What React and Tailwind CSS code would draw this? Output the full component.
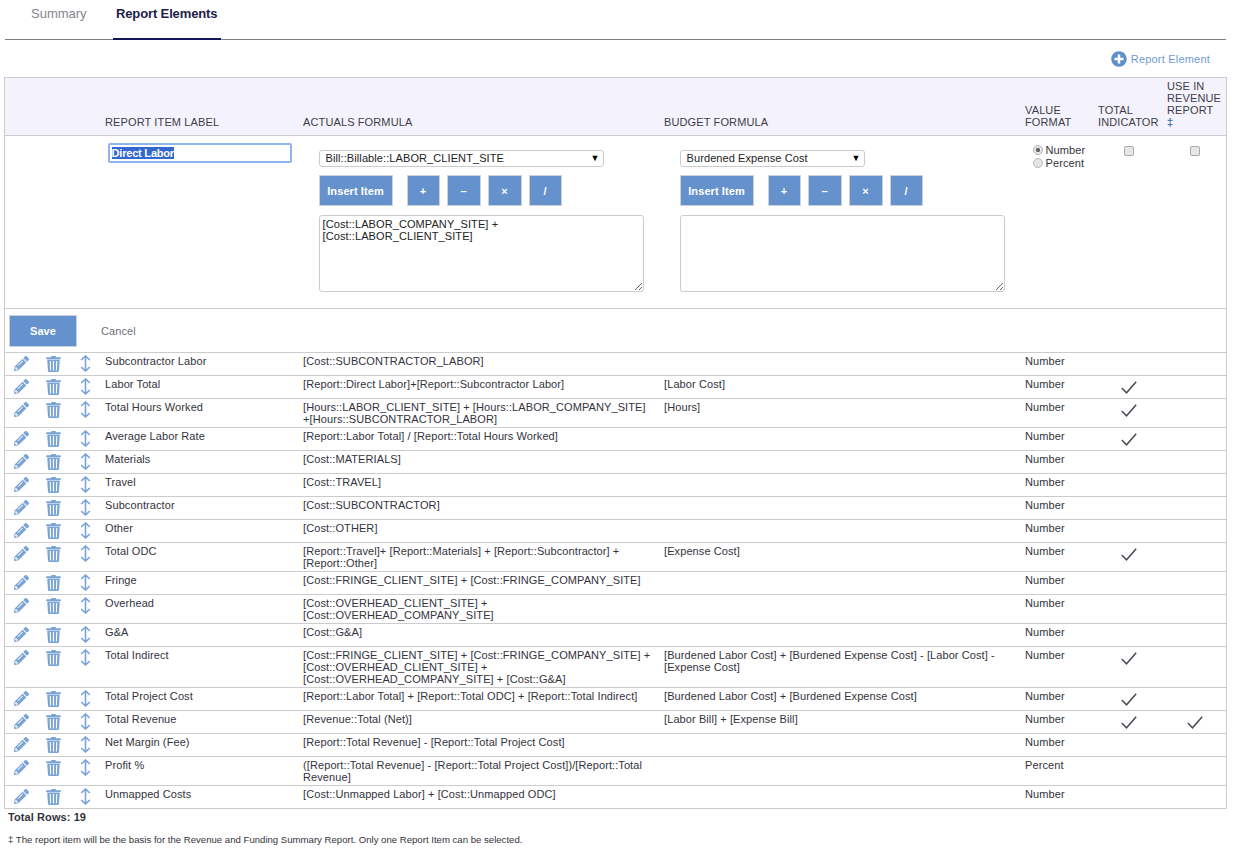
import React, { useEffect, useRef } from "react";
import { FaPlusCircle, FaPencilAlt } from "react-icons/fa";

const rows = [
  ["Subcontractor Labor", "[Cost::SUBCONTRACTOR_LABOR]", "", "Number", 0, 0],
  ["Labor Total", "[Report::Direct Labor]+[Report::Subcontractor Labor]", "[Labor Cost]", "Number", 1, 0],
  ["Total Hours Worked", "[Hours::LABOR_CLIENT_SITE] + [Hours::LABOR_COMPANY_SITE] +[Hours::SUBCONTRACTOR_LABOR]", "[Hours]", "Number", 1, 0],
  ["Average Labor Rate", "[Report::Labor Total] / [Report::Total Hours Worked]", "", "Number", 1, 0],
  ["Materials", "[Cost::MATERIALS]", "", "Number", 0, 0],
  ["Travel", "[Cost::TRAVEL]", "", "Number", 0, 0],
  ["Subcontractor", "[Cost::SUBCONTRACTOR]", "", "Number", 0, 0],
  ["Other", "[Cost::OTHER]", "", "Number", 0, 0],
  ["Total ODC", "[Report::Travel]+ [Report::Materials] + [Report::Subcontractor] + [Report::Other]", "[Expense Cost]", "Number", 1, 0],
  ["Fringe", "[Cost::FRINGE_CLIENT_SITE] + [Cost::FRINGE_COMPANY_SITE]", "", "Number", 0, 0],
  ["Overhead", "[Cost::OVERHEAD_CLIENT_SITE] + [Cost::OVERHEAD_COMPANY_SITE]", "", "Number", 0, 0],
  ["G&A", "[Cost::G&A]", "", "Number", 0, 0],
  ["Total Indirect", "[Cost::FRINGE_CLIENT_SITE] + [Cost::FRINGE_COMPANY_SITE] + [Cost::OVERHEAD_CLIENT_SITE] + [Cost::OVERHEAD_COMPANY_SITE] + [Cost::G&A]", "[Burdened Labor Cost] + [Burdened Expense Cost] - [Labor Cost] - [Expense Cost]", "Number", 1, 0],
  ["Total Project Cost", "[Report::Labor Total] + [Report::Total ODC] + [Report::Total Indirect]", "[Burdened Labor Cost] + [Burdened Expense Cost]", "Number", 1, 0],
  ["Total Revenue", "[Revenue::Total (Net)]", "[Labor Bill] + [Expense Bill]", "Number", 1, 1],
  ["Net Margin (Fee)", "[Report::Total Revenue] - [Report::Total Project Cost]", "", "Number", 0, 0],
  ["Profit %", "([Report::Total Revenue] - [Report::Total Project Cost])/[Report::Total Revenue]", "", "Percent", 0, 0],
  ["Unmapped Costs", "[Cost::Unmapped Labor] + [Cost::Unmapped ODC]", "", "Number", 0, 0],
];

const Trash = () => (
  <svg width="15" height="16" viewBox="0 0 15 16" fill="#7aa3d6" className="block">
    <path d="M5.5 0h4l.6 1.2H14c.5 0 .9.3.9.8v1H.1V2c0-.5.4-.8.9-.8h3.9z" />
    <path fillRule="evenodd" d="M1.2 3.6h12.6l-.8 11.2c0 .7-.5 1.2-1.2 1.2H3.2c-.7 0-1.2-.5-1.2-1.2zM3.7 5l.4 9.6h1L4.8 5zM6.9 5v9.6h1.2V5zM10.2 5l-.3 9.6h1L11.3 5z" />
  </svg>
);

const Arrows = () => (
  <svg width="11" height="17" viewBox="0 0 11 17" fill="none" stroke="#7aa3d6" strokeWidth="1.6" className="block">
    <path d="M5.5 1v15M1.2 5 5.5 1l4.3 4M1.2 12l4.3 4 4.3-4" />
  </svg>
);

const Check = () => (
  <svg width="16" height="13" viewBox="0 0 16 13" fill="none" stroke="#4a4a52" strokeWidth="1.5" className="block">
    <path d="M.8 7l4.7 4.8L15.2.8" />
  </svg>
);

const Btn = ({ children, className = "" }) => (
  <button type="button" className={`h-[31px] border border-[#c9d3df] bg-[#6592cd] text-white font-bold text-[11px] ${className}`}>{children}</button>
);

const Select = ({ value, className }) => (
  <div className={`relative h-[17px] ${className}`}>
    <select defaultValue={value} className="block w-full h-full appearance-none rounded-[3px] border border-[#ccc] bg-white pl-[6px] text-[11px] leading-[15px] text-[#222] outline-none">
      <option>{value}</option>
    </select>
    <span className="absolute right-[4px] top-[1px] text-[9px] leading-[14px] text-black pointer-events-none">▼</span>
  </div>
);

const FormulaEditor = ({ value, selectValue, selectClass }) => (
  <div className="pl-[20px] pt-[14px]">
    <Select value={selectValue} className={selectClass} />
    <div className="flex mt-[8px]">
      <Btn className="w-[74px] mr-[14px]">Insert Item</Btn>
      <div className="flex gap-[7px]">
        <Btn className="w-[33px]">+</Btn>
        <Btn className="w-[34px]">–</Btn>
        <Btn className="w-[34px]">×</Btn>
        <Btn className="w-[33px]">/</Btn>
      </div>
    </div>
    <textarea defaultValue={value} className="block mt-[9px] w-[325px] h-[77px] rounded-[3px] border border-[#ccc] bg-white px-[3px] py-[2px] text-[11px] leading-[12px] text-[#222] outline-none" />
  </div>
);

const boxCls = "block m-0 w-[10px] h-[10px] appearance-none rounded-[2px] border border-[#aaa] bg-[#e6e6e6]";
const radioCls = "block m-0 w-[10px] h-[10px] appearance-none rounded-full border border-[#b5b5b5] bg-[#e6e6e6] checked:bg-[radial-gradient(circle,#666_32%,#e6e6e6_45%)]";

export default function App() {
  const inputRef = useRef(null);
  useEffect(() => {
    inputRef.current?.focus();
    inputRef.current?.select();
  }, []);

  const th = "align-bottom text-left font-normal text-[11px] leading-[12px] tracking-[0.12px] text-[#3d3d48] pl-[4.5px] pb-[7px]";
  const td = "align-top pl-[4.5px] pt-[2px] pb-[2px]";

  return (
    <div className="w-[1236px] h-[855px] overflow-hidden bg-white text-[11px] leading-[12px] tracking-[0.09px] text-[#33333d]" style={{ fontFamily: '"Liberation Sans", Arial, sans-serif' }}>
      <div className="ml-[5px] mr-[10px] h-[40px] flex items-start border-b border-[#808080] pl-[23px]">
        <div className="w-[85px] pt-[7px] pl-[3px] text-[13px] leading-[14px] tracking-normal text-[#85858f]">Summary</div>
        <div className="h-[40px] w-[108px] border-b-2 border-[#14175a] pt-[7px] pl-[3px] text-[13px] leading-[14px] font-bold tracking-[-0.13px] text-[#1c2048]">Report Elements</div>
      </div>

      <div className="h-[37px] flex items-start justify-end pr-[26px] pt-[11px]">
        <a className="flex items-center gap-[4px] text-[#6f9ad0] text-[11px] tracking-[0.2px] leading-[16px]">
          <FaPlusCircle className="text-[16px] text-[#5f90cc]" />
          Report Element
        </a>
      </div>

      <table className="ml-[4px] w-[1222px] table-fixed border-collapse">
        <colgroup>
          <col className="w-[31px]" />
          <col className="w-[32px]" />
          <col className="w-[33px]" />
          <col className="w-[198px]" />
          <col className="w-[361px]" />
          <col className="w-[361px]" />
          <col className="w-[73px]" />
          <col className="w-[69px]" />
          <col className="w-[64px]" />
        </colgroup>
        <thead>
          <tr className="h-[58px] bg-[#f4f3fd] border border-[#ccc]">
            <th className={th} colSpan={3}></th>
            <th className={th}>REPORT ITEM LABEL</th>
            <th className={th}>ACTUALS FORMULA</th>
            <th className={th}>BUDGET FORMULA</th>
            <th className={th}>VALUE FORMAT</th>
            <th className={th}>TOTAL INDICATOR</th>
            <th className={th}>USE IN REVENUE REPORT<br /><span className="text-[#3f6fc0] font-bold">‡</span></th>
          </tr>
        </thead>
        <tbody>
          <tr className="h-[173px] border border-[#ccc]">
            <td colSpan={3}></td>
            <td className="align-top pl-[7px] pt-[7px]">
              <input
                ref={inputRef}
                defaultValue="Direct Labor"
                className="block w-[184px] h-[20px] rounded-[2px] border-2 border-[#8db4ec] px-[2px] text-[11px] font-bold tracking-[-0.2px] text-[#222] outline-none selection:bg-[#3367d1] selection:text-white"
              />
            </td>
            <td className="align-top">
              <FormulaEditor value={"[Cost::LABOR_COMPANY_SITE] +\n[Cost::LABOR_CLIENT_SITE]"} selectValue="Bill::Billable::LABOR_CLIENT_SITE" selectClass="w-[285px]" />
            </td>
            <td className="align-top">
              <FormulaEditor value="" selectValue="Burdened Expense Cost" selectClass="w-[185px]" />
            </td>
            <td className="align-top pl-[12px] pt-[7px]">
              <label className="flex items-center gap-[3px] h-[13px]">
                <input type="radio" name="fmt" defaultChecked className={radioCls} />Number
              </label>
              <label className="flex items-center gap-[3px] h-[13px]">
                <input type="radio" name="fmt" className={radioCls} />Percent
              </label>
            </td>
            <td className="align-top pl-[30px] pt-[10px]">
              <input type="checkbox" className={boxCls} />
            </td>
            <td className="align-top pl-[27px] pt-[10px]">
              <input type="checkbox" className={boxCls} />
            </td>
          </tr>
          <tr className="h-[44px] border border-[#ccc]">
            <td colSpan={9} className="align-top pl-[4px] pt-[6px]">
              <div className="flex items-center">
                <Btn className="!h-[32px] w-[68px]">Save</Btn>
                <span className="ml-[24px] text-[#6f6f7a]">Cancel</span>
              </div>
            </td>
          </tr>
          {rows.map((r) => (
            <tr key={r[0]} className="border border-[#ccc]">
              <td className="align-top pl-[9px] pt-[3px] pb-[1px] h-[23px]">
                <FaPencilAlt className="text-[15px] text-[#7aa3d6]" />
              </td>
              <td className="align-top pl-[10px] pt-[3px] pb-[1px]"><Trash /></td>
              <td className="align-top pl-[12px] pt-[2px] pb-[1px]"><Arrows /></td>
              <td className={td}>{r[0]}</td>
              <td className={`${td} pr-[7px]`}>{r[1]}</td>
              <td className={`${td} pr-[20px]`}>{r[2]}</td>
              <td className={td}>{r[3]}</td>
              <td className="align-top pl-[27px] pt-[5px] pb-[1px]">{r[4] ? <Check /> : null}</td>
              <td className="align-top pl-[24px] pt-[5px] pb-[1px]">{r[5] ? <Check /> : null}</td>
            </tr>
          ))}
        </tbody>
      </table>

      <div className="pl-[8px] pt-[2px] font-bold text-[#33333d]">Total Rows: 19</div>
      <div className="pl-[8px] pt-[11px] text-[9.6px] leading-[12px] tracking-normal text-[#33333d]">‡ The report item will be the basis for the Revenue and Funding Summary Report. Only one Report Item can be selected.</div>
    </div>
  );
}
